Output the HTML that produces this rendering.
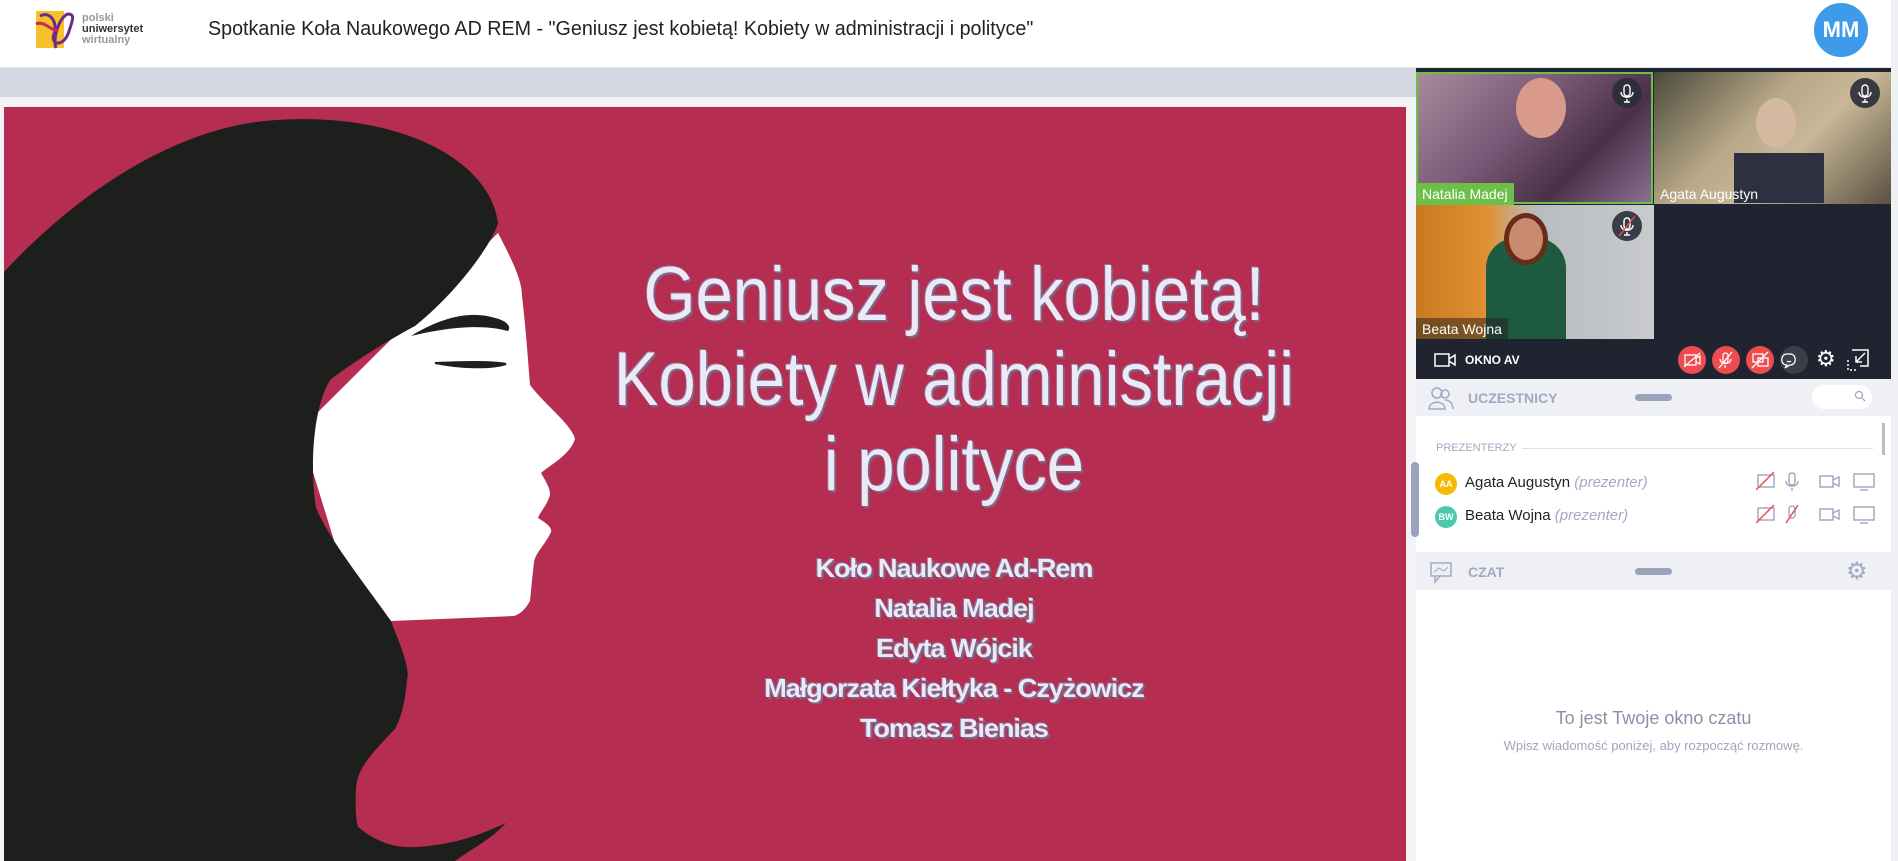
<!DOCTYPE html>
<html><head><meta charset="utf-8"><style>
*{margin:0;padding:0;box-sizing:border-box}
body{width:1898px;height:861px;overflow:hidden;background:#fff;font-family:"Liberation Sans",sans-serif;position:relative}
.a{position:absolute}
.hdr{left:0;top:0;width:1898px;height:68px;background:#fff;border-bottom:1px solid #e4e6ec}
.title{left:208px;top:18px;font-size:20px;color:#222;transform:scaleX(.985);transform-origin:left}
.slide{left:4px;top:107px;width:1402px;height:754px;background:#b52d50;overflow:hidden}
.t{color:#ece8f6;text-shadow:2px 2px 1px #7a6a8a,-1px -1px 0 #8a7ca0;text-align:center;width:800px;left:550px}
.big{font-size:76px;line-height:85px;transform:scaleX(.88);transform-origin:center}
.nm{font-size:26px;font-weight:bold;letter-spacing:-1px;line-height:40px;transform:scaleX(1.04)}
.panel{left:1416px;top:68px;width:475px;height:793px;background:#fff}
.vid{background:#1f2430}
.lbl{color:#fff;font-size:14px;padding:3px 6px}
.mic{width:30px;height:30px;border-radius:50%;background:#2a2e38;opacity:.9}
.rc{width:28px;height:28px;border-radius:50%;background:#ef4c4f}
.gh{background:#eef0f6}
.gt{color:#a3a9c0;font-weight:bold;font-size:14px}
.hand{width:37px;height:7px;border-radius:4px;background:#9aa3ba}
</style></head><body>
<div class="a hdr">
 <div class="a" style="left:36px;top:11px;width:28px;height:37px;background:#f6c12a"></div>
 <svg class="a" style="left:32px;top:8px" width="50" height="44"><path d="M8 8 C20 2 26 18 22 26 C18 36 30 40 36 26 C40 14 44 6 36 6 C28 8 20 30 24 40" fill="none" stroke="#6a2d8a" stroke-width="3"/><path d="M4 16 C12 12 20 24 26 22" fill="none" stroke="#c92a5a" stroke-width="3"/></svg>
 <div class="a" style="left:82px;top:13px;font-size:11px;line-height:11px;color:#999;font-weight:bold">polski<br><span style="color:#333">uniwersytet</span><br>wirtualny</div>
 <div class="a title">Spotkanie Koła Naukowego AD REM - "Geniusz jest kobietą! Kobiety w administracji i polityce"</div>
 <div class="a" style="left:1814px;top:3px;width:54px;height:54px;border-radius:50%;background:#3d9be9;color:#fff;font-weight:bold;font-size:22px;text-align:center;line-height:54px">MM</div>
</div>
<div class="a" style="left:0;top:68px;width:1416px;height:29px;background:#d3d7e0"></div>
<div class="a" style="left:0;top:97px;width:1416px;height:764px;background:#f4f3f8"></div>
<div class="a slide">
<svg class="a" style="left:-4px;top:-107px" width="1410" height="861">
 <path d="M498 233 C512 260 522 280 522 296 C526 330 528 360 530 385 C545 405 572 425 575 439 C570 455 550 465 541 473 C548 485 552 492 549 498 C545 508 540 512 538 518 C548 524 552 528 551 532 C545 545 536 552 534 562 C532 580 531 592 530 601 C525 610 520 614 514 616 L391 621 L340 560 L300 430 Z" fill="#fff"/>
 <path d="M4 272 C80 190 180 125 277 120 C400 112 490 160 498 223 C494 240 460 290 415 326 C370 350 336 375 330 380 C312 410 310 470 316 508 C330 540 356 572 391 621 C402 650 410 668 407 680 C405 705 400 720 395 729 C370 755 356 770 356 790 C355 810 356 820 358 827 C380 845 400 848 415 847 C460 845 490 830 506 823 C490 840 470 850 455 861 L0 861 L0 276 Z" fill="#1d1f1c"/>
 <path d="M411 336 C440 318 470 310 495 318 C505 320 512 326 508 331 C490 326 460 324 411 336 Z" fill="#1d1f1c"/>
 <path d="M435 363 C460 368 490 369 506 364 C490 361 460 362 435 363 Z" stroke="#1d1f1c" stroke-width="2" fill="#1d1f1c"/>
</svg>
 <div class="a t big" style="top:145px">Geniusz jest kobietą!<br>Kobiety w administracji<br>i polityce</div>
 <div class="a t nm" style="top:441px">Koło Naukowe Ad-Rem<br>Natalia Madej<br>Edyta Wójcik<br>Małgorzata Kiełtyka - Czyżowicz<br>Tomasz Bienias</div>
</div>
<div class="a" style="left:1891px;top:0;width:7px;height:861px;background:#eef0f3"></div>
<div class="a panel">
 <div class="a vid" style="left:0;top:0;width:475px;height:311px"></div>
 <div class="a" style="left:0;top:4px;width:237px;height:132px;background:linear-gradient(135deg,#a88a9c,#7a5a78 40%,#4a3048 70%,#8a7090);border:2px solid #6cc04a"></div>
 <div class="a" style="left:100px;top:10px;width:50px;height:60px;border-radius:50%;background:#d99a8c"></div>
 <div class="a lbl" style="left:0;top:115px;background:#6cc04a">Natalia Madej</div>
 <div class="a mic" style="left:196px;top:10px"></div>
 <div class="a" style="left:238px;top:4px;width:237px;height:132px;background:linear-gradient(135deg,#4a4a3a,#b8a888 40%,#c8b898 60%,#5a5040)"></div>
 <div class="a" style="left:340px;top:30px;width:40px;height:50px;border-radius:50%;background:#d4b8a0"></div>
 <div class="a" style="left:318px;top:85px;width:90px;height:50px;background:#2c3040"></div>
 <div class="a lbl" style="left:238px;top:115px">Agata Augustyn</div>
 <div class="a mic" style="left:434px;top:10px"></div>
 <div class="a" style="left:0;top:137px;width:238px;height:134px;background:linear-gradient(90deg,#c87a20 0,#e09030 30%,#b8bcc0 50%,#c8cacc)"></div>
 <div class="a" style="left:70px;top:170px;width:80px;height:101px;background:#1e5a40;border-radius:30px 30px 0 0"></div>
 <div class="a" style="left:88px;top:145px;width:44px;height:52px;border-radius:50%;background:#c88a70;border:5px solid #6a2a18"></div>
 <div class="a lbl" style="left:0;top:250px;background:rgba(30,30,30,.5)">Beata Wojna</div>
 <div class="a mic" style="left:196px;top:143px"></div>
 <svg class="a" style="left:196px;top:10px" width="270" height="165" fill="none" stroke="#fff" stroke-width="1.4">
  <rect x="12" y="7" width="6" height="11" rx="3"/><path d="M9 14 C9 21 21 21 21 14 M15 21 V24 M12 24 H18"/>
  <rect x="250" y="7" width="6" height="11" rx="3"/><path d="M247 14 C247 21 259 21 259 14 M253 21 V24 M250 24 H256"/>
  <rect x="12" y="140" width="6" height="11" rx="3"/><path d="M9 147 C9 154 21 154 21 147 M15 154 V157 M12 157 H18"/><path d="M7 158 L23 138" stroke="#ef4c4f"/>
 </svg>
 <svg class="a" style="left:18px;top:284px" width="22" height="16"><rect x="1" y="2" width="14" height="12" fill="none" stroke="#fff" stroke-width="1.5"/><path d="M15 7 L21 3 V13 L15 9" fill="none" stroke="#fff" stroke-width="1.5"/></svg>
 <div class="a" style="left:49px;top:285px;color:#fff;font-weight:bold;font-size:12px">OKNO AV</div>
 <div class="a rc" style="left:262px;top:278px"></div>
 <div class="a rc" style="left:296px;top:278px"></div>
 <div class="a rc" style="left:330px;top:278px"></div>
 <div class="a rc" style="left:364px;top:278px;background:#3a3f4a"></div>
 <svg class="a" style="left:262px;top:278px" width="130" height="28" fill="none" stroke="#fff" stroke-width="1.3">
  <rect x="7" y="9" width="11" height="10"/><path d="M18 12 L22 10 V18 L18 16 M6 21 L22 7"/>
  <rect x="45" y="7" width="5" height="10" rx="2.5"/><path d="M42 13 C42 19 53 19 53 13 M47 19 V22 M41 22 L54 6"/>
  <rect x="75" y="8" width="10" height="8"/><rect x="80" y="12" width="10" height="8"/><path d="M74 22 L90 6"/>
  <path d="M109 8 C102 8 102 19 109 19 L107 22 L112 19 C119 19 119 8 112 8 Z M109 15 C110 16 112 16 113 15"/>
 </svg>
 <div class="a" style="left:400px;top:280px;color:#fff;font-size:22px;line-height:22px">⚙</div>
 <svg class="a" style="left:430px;top:280px" width="24" height="24" fill="none" stroke="#fff" stroke-width="1.5"><path d="M6 2 H22 V18 H14"/><path d="M2 12 V22 H12" stroke-dasharray="2 2"/><path d="M19 5 L10 14 M10 8 V14 H16"/></svg>
 <div class="a gh" style="left:0;top:311px;width:475px;height:37px"></div>
 <svg class="a" style="left:12px;top:318px" width="26" height="24"><circle cx="9" cy="7" r="5" fill="none" stroke="#a3a9c0" stroke-width="1.5"/><circle cx="17" cy="8" r="4" fill="none" stroke="#a3a9c0" stroke-width="1.5"/><path d="M1 23 C1 14 17 14 17 23 Z M17 14 C22 14 25 18 25 23" fill="none" stroke="#a3a9c0" stroke-width="1.5"/></svg>
 <div class="a gt" style="left:52px;top:322px">UCZESTNICY</div>
 <div class="a hand" style="left:219px;top:326px"></div>
 <div class="a" style="left:396px;top:317px;width:60px;height:24px;border-radius:12px;background:#fff"></div>
 <svg class="a" style="left:438px;top:322px" width="12" height="12" fill="none" stroke="#a3a9c0" stroke-width="1.3"><circle cx="5" cy="5" r="3.5"/><path d="M8 8 L11 11"/></svg>
 <div class="a" style="left:20px;font-size:11px;color:#a3a9c0;top:374px">PREZENTERZY</div>
 <div class="a" style="left:106px;top:380px;width:351px;height:1px;background:#dde0e8"></div>
 <div class="a" style="left:19px;top:405px;width:22px;height:22px;border-radius:50%;background:#f6b800;color:#fff;font-size:9px;font-weight:bold;text-align:center;line-height:22px">AA</div>
 <div class="a" style="left:49px;top:406px;font-size:15px;color:#222">Agata Augustyn <i style="color:#a3a9c0">(prezenter)</i></div>
 <div class="a" style="left:19px;top:438px;width:22px;height:22px;border-radius:50%;background:#4cc9ad;color:#fff;font-size:9px;font-weight:bold;text-align:center;line-height:22px">BW</div>
 <div class="a" style="left:49px;top:439px;font-size:15px;color:#222">Beata Wojna <i style="color:#a3a9c0">(prezenter)</i></div>
 <svg class="a" style="left:340px;top:404px" width="125" height="60" fill="none" stroke="#a3a9c0" stroke-width="1.5">
  <rect x="2" y="3" width="16" height="12"/><path d="M0 18 L18 0" stroke="#ef4c4f"/>
  <rect x="33" y="1" width="6" height="12" rx="3"/><path d="M30 9 C30 16 42 16 42 9 M36 16 V19"/>
  <rect x="64" y="4" width="13" height="11"/><path d="M77 8 L83 5 V14 L77 11"/>
  <rect x="98" y="2" width="20" height="13"/><path d="M104 18 H112"/>
  <rect x="2" y="36" width="16" height="12"/><path d="M0 51 L18 33" stroke="#ef4c4f"/>
  <rect x="33" y="34" width="6" height="12" rx="3"/><path d="M30 51 L42 33" stroke="#ef4c4f"/>
  <rect x="64" y="37" width="13" height="11"/><path d="M77 41 L83 38 V47 L77 44"/>
  <rect x="98" y="35" width="20" height="13"/><path d="M104 51 H112"/>
 </svg>
 <div class="a" style="left:-5px;top:394px;width:8px;height:75px;border-radius:4px;background:#9aa3ba"></div>
 <div class="a" style="left:466px;top:355px;width:3px;height:32px;background:#b8bdc8"></div>
 <div class="a gh" style="left:0;top:484px;width:475px;height:38px"></div>
 <svg class="a" style="left:14px;top:494px" width="24" height="22"><rect x="1" y="1" width="20" height="13" fill="none" stroke="#a3a9c0" stroke-width="1.5"/><path d="M5 14 V20 L10 14" fill="none" stroke="#a3a9c0" stroke-width="1.5"/><path d="M4 10 L9 6 L14 9 L18 5" fill="none" stroke="#a3a9c0"/></svg>
 <div class="a gt" style="left:52px;top:496px">CZAT</div>
 <div class="a hand" style="left:219px;top:500px"></div>
 <div class="a" style="left:430px;top:489px;color:#a3a9c0;font-size:24px">⚙</div>
 <div class="a" style="left:0;width:475px;text-align:center;font-size:18px;color:#8a91a8;top:640px">To jest Twoje okno czatu</div>
 <div class="a" style="left:0;width:475px;text-align:center;font-size:13px;color:#a0a6bb;top:670px">Wpisz wiadomość poniżej, aby rozpocząć rozmowę.</div>
</div>
</body></html>
